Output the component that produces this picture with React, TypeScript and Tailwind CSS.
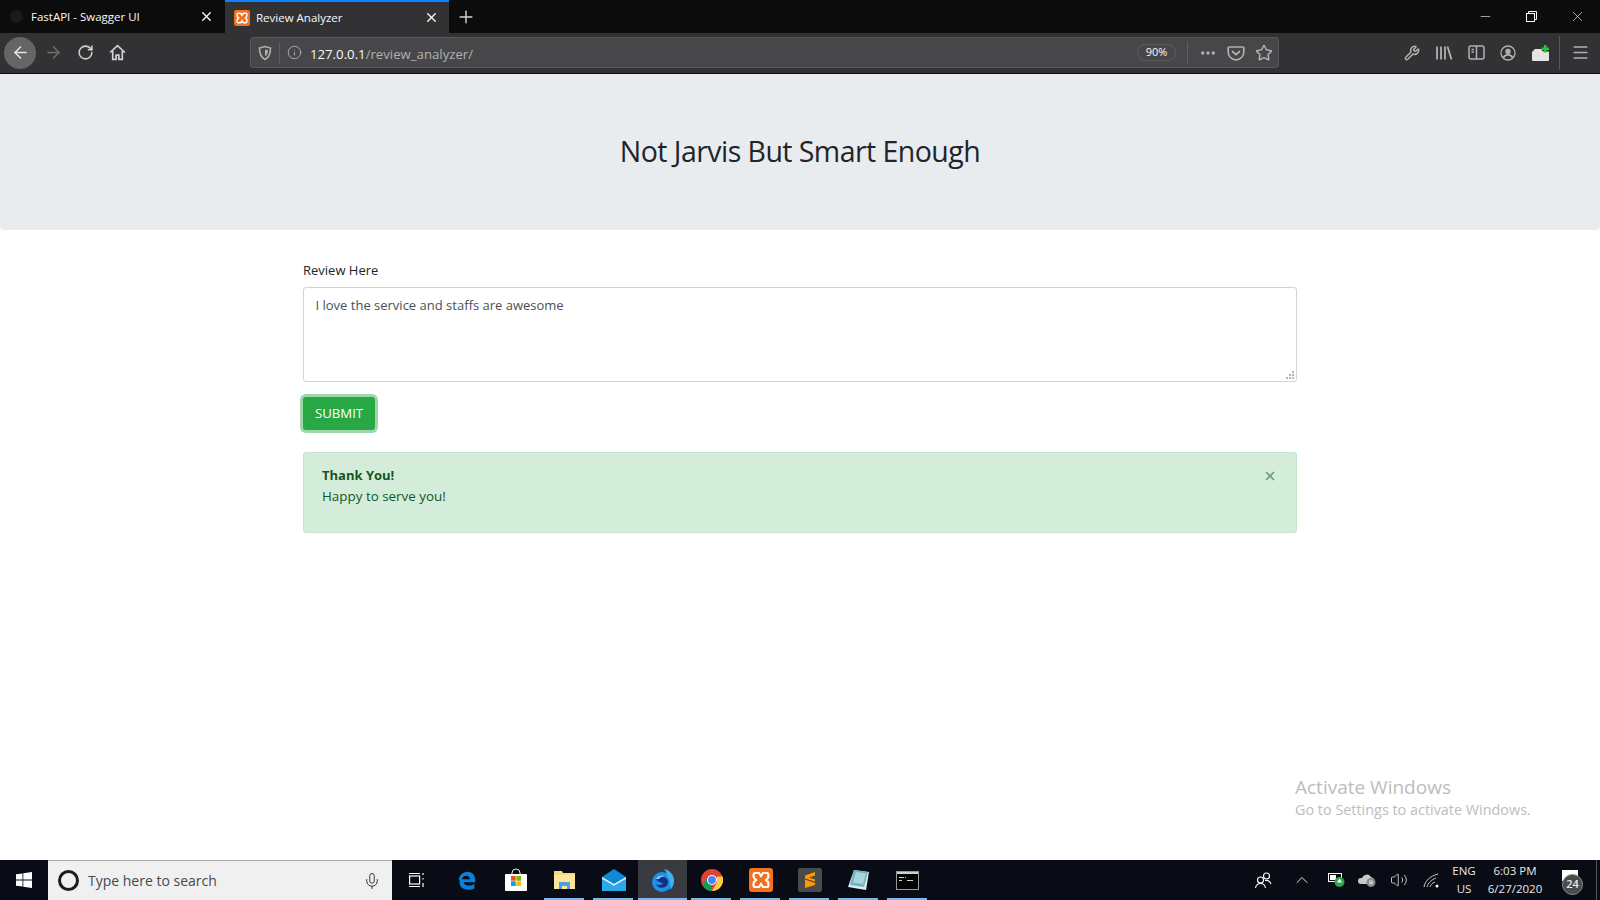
import { ArrowLeft, ArrowRight, RotateCw, Plus, X, Minus, Info, Ellipsis, Star, Wrench, Menu, Mic, ChevronUp, Volume2 } from "lucide-react"

const font = "font-['Open_Sans','Noto_Sans',sans-serif]"

function XamppIcon({ size = 16 }: { size?: number }) {
  return (
    <svg width={size} height={size} viewBox="0 0 24 24">
      <rect width="24" height="24" rx="3" fill="#f4701f" />
      <path
        d="M6 5h4l2 3 2-3h4c2 0 2 5 0 6l-1 1 1 1c2 1 2 6 0 6h-4l-2-3-2 3H6c-2 0-2-5 0-6l1-1-1-1C4 10 4 5 6 5z"
        fill="none"
        stroke="#fff"
        strokeWidth="2.2"
      />
    </svg>
  )
}

function ShieldIcon() {
  return (
    <svg width="16" height="16" viewBox="0 0 16 16" fill="none" stroke="#b1b1b3" strokeWidth="1.6">
      <path d="M2.5 3 8 1.5 13.500 3c0 6-1.500 9.500-5.500 11.500C4 12.500 2.500 9 2.500 3z" />
      <path d="M8 4.500 11 5.300c0 3-.8 4.700-3 6z" fill="#b1b1b3" stroke="none" />
    </svg>
  )
}

function PocketIcon() {
  return (
    <svg width="18" height="18" viewBox="0 0 18 18" fill="none" stroke="#b1b1b3" strokeWidth="1.700">
      <path d="M2 3h14a.8.8 0 0 1 .8.800V8a7.800 7.800 0 0 1-15.600 0V3.800A.8.8 0 0 1 2 3z" />
      <path d="m5.500 7.500 3.500 3.200 3.500-3.200" strokeLinecap="round" />
    </svg>
  )
}

function LibraryIcon() {
  return (
    <svg width="18" height="16" viewBox="0 0 18 16" fill="none" stroke="#b1b1b3" strokeWidth="1.800">
      <path d="M2 1.500v13M6 1.500v13M10 1.500v13M12.500 1.500l4 13" />
    </svg>
  )
}

function SidebarIcon() {
  return (
    <svg width="17" height="15" viewBox="0 0 17 15" fill="none" stroke="#b1b1b3" strokeWidth="1.500">
      <rect x="1" y="1" width="15" height="13" rx="2" />
      <path d="M8.500 1v13M3.500 4.500h2.500M3.500 7h2.500" />
    </svg>
  )
}

function AccountIcon() {
  return (
    <svg width="16" height="16" viewBox="0 0 16 16" fill="none" stroke="#b1b1b3" strokeWidth="1.300">
      <circle cx="8" cy="8" r="7" />
      <circle cx="8" cy="6.500" r="2.700" fill="#b1b1b3" stroke="none" />
      <path d="M3.500 12.500c1-2 2.800-2.600 4.500-2.600s3.500.6 4.500 2.600" strokeWidth="1.800" />
    </svg>
  )
}

function ExtensionIcon() {
  return (
    <svg width="17" height="16" viewBox="0 0 17 16">
      <path d="M0 7 3 4h6l2 2.500h5a1 1 0 0 1 1 1V15a1 1 0 0 1-1 1H1a1 1 0 0 1-1-1z" fill="#e4e4e4" />
      <path d="M9.500 2.500H12V0h2.500v2.500H17V5h-2.500v2.500H12V5H9.500z" fill="#22c733" />
    </svg>
  )
}

function BrowserChrome() {
  return (
    <div className="shrink-0">
      <div className="h-[33px] flex bg-[#0c0c0d] text-[11.500px] text-[#f9f9fa]">
        <div className="w-[225px] flex items-center pl-[10px] pr-[11px]">
          <span className="w-[13px] h-[13px] rounded-full bg-[#1a1a1a] mr-[8px]" />
          <span className="flex-1">FastAPI - Swagger UI</span>
          <X size={15} strokeWidth={2.2} />
        </div>
        <div className="w-[224px] flex items-center pl-[9px] pr-[10px] bg-[#323234] border-t-2 border-[#0a84ff]">
          <XamppIcon />
          <span className="flex-1 ml-[6px]">Review Analyzer</span>
          <X size={15} strokeWidth={2.2} />
        </div>
        <div className="w-[34px] flex items-center justify-center">
          <Plus size={20} strokeWidth={1.700} color="#d4d4d6" />
        </div>
        <div className="flex-1" />
        <div className="w-[46px] flex items-center justify-center"><Minus size={15} strokeWidth={1} /></div>
        <div className="w-[46px] flex items-center justify-center">
          <svg width="11" height="11" viewBox="0 0 11 11" fill="none" stroke="#f9f9fa">
            <rect x="0.500" y="2.500" width="8" height="8" />
            <path d="M2.500 2.500v-2h8v8h-2" />
          </svg>
        </div>
        <div className="w-[46px] flex items-center justify-center"><X size={17} strokeWidth={0.9} /></div>
      </div>
      <div className="h-[41px] flex items-center bg-[#323234] border-b border-[#0c0c0d] pb-[1px]">
        <div className="flex items-center pl-[4px] w-[250px]">
          <span className="w-[32px] h-[32px] rounded-full bg-[#656566] flex items-center justify-center">
            <ArrowLeft size={19} color="#e4e4e6" strokeWidth={2} />
          </span>
          <span className="w-[34px] flex justify-center"><ArrowRight size={19} color="#6f6f71" strokeWidth={2} /></span>
          <span className="w-[30px] flex justify-center"><RotateCw size={17} color="#d0d0d2" strokeWidth={2.200} /></span>
          <span className="w-[34px] flex justify-center">
            <svg width="17" height="17" viewBox="0 0 16 16" fill="none" stroke="#d0d0d2" strokeWidth="1.600">
              <path d="M1 8 8 1.500 15 8M3.500 6.500V14.500h3.200v-4h2.600v4h3.200V6.500" />
            </svg>
          </span>
        </div>
        <div className="w-[1029px] h-[31px] flex items-center bg-[#474749] border border-[#58585a] rounded-[3px] text-[#b1b1b3]">
          <span className="w-[28px] flex justify-center"><ShieldIcon /></span>
          <span className="w-px h-[22px] bg-[#5f5f61]" />
          <span className="w-[29px] flex justify-center"><Info size={15} strokeWidth={1.500} /></span>
          <span className="flex-1 text-[13.200px] pt-[4px] pl-[1px] text-[#b1b1b3]">
            <span className="text-[#f9f9fa]">127.0.0.1</span>/review_analyzer/
          </span>
          <span className="w-[39px] h-[17px] rounded-full border border-[#5f5f61] text-[11px] text-[#f9f9fa] flex items-center justify-center mr-[11px]">90%</span>
          <span className="w-px h-[22px] bg-[#5f5f61]" />
          <span className="w-[29px] ml-[5px] flex justify-center"><Ellipsis size={18} strokeWidth={2.500} /></span>
          <span className="w-[28px] flex justify-center"><PocketIcon /></span>
          <span className="w-[28px] flex justify-center"><Star size={18} strokeWidth={2} /></span>
        </div>
        <div className="flex-1 flex items-center pl-[117px]">
          <span className="w-[32px] flex justify-center"><Wrench size={16} color="#b1b1b3" strokeWidth={2.200} /></span>
          <span className="w-[32px] flex justify-center"><LibraryIcon /></span>
          <span className="w-[32px] flex justify-center"><SidebarIcon /></span>
          <span className="w-[32px] flex justify-center"><AccountIcon /></span>
          <span className="w-[32px] flex justify-center"><ExtensionIcon /></span>
          <span className="w-px h-[34px] bg-[#58585a] ml-[3px]" />
          <span className="flex-1 flex justify-center"><Menu size={19} color="#b1b1b3" strokeWidth={2} /></span>
        </div>
      </div>
    </div>
  )
}

function Page() {
  return (
    <div className="relative flex-1 bg-white">
      <div className="h-[156px] bg-[#e9ecef] rounded-b-[4px] flex items-center justify-center pb-[1px]">
        <h1 className="text-[28.500px] tracking-[-0.55px] font-normal text-[#212529] leading-none">Not Jarvis But Smart Enough</h1>
      </div>
      <div className="w-[994px] mx-auto pt-[31px]">
        <label className="block text-[13px] leading-[19px] text-[#212529] mb-[7px]">Review Here</label>
        <div className="relative h-[95px] border border-[#ced4da] rounded-[3px] pl-[11.500px] pr-[12px] pt-[7px] text-[13px] leading-[20px] text-[#495057]">
          I love the service and staffs are awesome
          <svg className="absolute right-[1px] bottom-[1px]" width="10" height="10" viewBox="0 0 10 10" fill="#b5b5b5">
            <rect x="7" y="1" width="2" height="2" />
            <rect x="4" y="4" width="2" height="2" />
            <rect x="7" y="4" width="2" height="2" />
            <rect x="1" y="7" width="2" height="2" />
            <rect x="4" y="7" width="2" height="2" />
            <rect x="7" y="7" width="2" height="2" />
          </svg>
        </div>
        <button className="block mt-[15px] w-[72px] h-[33px] rounded-[3px] bg-[#28a745] text-white text-[13.200px] shadow-[0_0_0_3px_rgba(40,167,69,0.45)]">
          SUBMIT
        </button>
        <div className="mt-[22px] h-[81px] flex justify-between bg-[#d4edda] border border-[#c3e6cb] rounded-[3px] pl-[18px] pr-[19px] pt-[12px] text-[13.400px] leading-[21px] text-[#155724]">
          <div>
            <div className="font-bold text-[13px]">Thank You!</div>
            <div>Happy to serve you!</div>
          </div>
          <X size={14} strokeWidth={3} color="#6f9f7d" className="mt-[4px]" />
        </div>
      </div>
      <div className="absolute left-[1295px] top-[700px] text-[#bdbdbd]">
        <div className="text-[19px] leading-[26px]">Activate Windows</div>
        <div className="text-[14.400px] leading-[20px]">Go to Settings to activate Windows.</div>
      </div>
    </div>
  )
}

function TaskCell({ active, open, first, children }: { active?: boolean; open?: boolean; first?: boolean; children: React.ReactNode }) {
  return (
    <div className={`relative ${first ? "w-[50px]" : "w-[49px]"} h-full flex items-center justify-center ${active ? "bg-[#393b41]" : ""}`}>
      {children}
      {open && (
        <span className={`absolute bottom-0 h-[2px] bg-[#76b9ed] ${active ? "left-0 right-0" : "left-[4px] right-[5px]"}`} />
      )}
    </div>
  )
}

function Taskbar() {
  return (
    <div className="h-[40px] shrink-0 flex bg-[#090c14] text-white">
      <div className="w-[48px] flex items-center justify-center">
        <svg width="16" height="16" viewBox="0 0 16 16" fill="#fff">
          <path d="M0 2.300 6.500 1.400v6.200H0zM7.300 1.300 16 0v7.600H7.300zM0 8.400h6.500v6.200L0 13.700zM7.300 8.400H16V16l-8.700-1.300z" />
        </svg>
      </div>
      <div className="w-[344px] flex items-center bg-[#f0f0f0] border-t border-[#a9a9a9] pl-[10px] pr-[11px] text-[#444a50]">
        <span className="w-[21px] h-[21px] rounded-full border-[3px] border-[#1c1c1c] mr-[9px]" />
        <span className="flex-1 text-[14px]">Type here to search</span>
        <Mic size={18} color="#333" strokeWidth={1.300} />
      </div>
      <TaskCell first>
        <svg width="16" height="16" viewBox="0 0 16 16" fill="none" stroke="#fff" strokeWidth="1.200">
          <rect x="0.600" y="4" width="10" height="8" />
          <path d="M0 1.500h11M0 14.500h11M14 1v2M14 6v1.500M14 11v4" />
        </svg>
      </TaskCell>
      <TaskCell>
        <svg width="21" height="21" viewBox="0 0 24 24" fill="none">
          <path d="M3 13C3 6 8 2 13 2c6 0 9 4 9 10v2H9c.5 4 6.500 5 12 2v5c-6 3-17 2-17-7 0-3 2-6 5-7-1.500 1-2 2.500-2 3.500h9c0-4-6-6-9-1C5.500 10 4 11 3 13z" fill="#0a7fdc" />
        </svg>
      </TaskCell>
      <TaskCell>
        <svg width="24" height="24" viewBox="0 0 24 24">
          <path d="M8 7V5a4 4 0 0 1 8 0v2" fill="none" stroke="#e8e8e8" strokeWidth="1" />
          <rect x="1" y="6" width="22" height="17" rx="1" fill="#fff" />
          <rect x="7" y="8" width="4.700" height="4.700" fill="#f25022" />
          <rect x="12.300" y="8" width="4.700" height="4.700" fill="#7fba00" />
          <rect x="7" y="13.300" width="4.700" height="4.700" fill="#00a4ef" />
          <rect x="12.300" y="13.300" width="4.700" height="4.700" fill="#ffb900" />
        </svg>
      </TaskCell>
      <TaskCell open>
        <svg width="23" height="20" viewBox="0 0 23 20">
          <path d="M1 1h8l1 2h12v16H1z" fill="#f5d97e" />
          <path d="M1 5h21v14H1z" fill="#fbe69c" />
          <path d="M6 19v-7h11v7h-3v-3H9v3z" fill="#4aa3df" />
        </svg>
      </TaskCell>
      <TaskCell open>
        <svg width="24" height="22" viewBox="0 0 24 22">
          <path d="M0 8 12 0l12 8v14H0z" fill="#0f8ad9" />
          <path d="M0 8l12 7 12-7v2l-12 7L0 10z" fill="#e4f3fc" />
          <path d="M0 10l12 7 12-7v12H0z" fill="#29a9ea" />
        </svg>
      </TaskCell>
      <TaskCell active open>
        <svg width="24" height="24" viewBox="0 0 24 24">
          <circle cx="11" cy="14" r="10" fill="#1f8fe8" />
          <path d="M13 1c6 1 10 6 10 12 0 4-2 7-4 9 1-6 0-11-3-14 0-3-1-5-3-7z" fill="#3fb2f5" />
          <path d="M5 12c2-3 7-4 10-2 3 2 3 7-1 9-4 2-8 0-9-3 3 2 6 1 7-1-2 0-4-1-7-3z" fill="#17307e" />
          <path d="M5 11c2-3 6-4 9-3-3 0-5 1-6 3z" fill="#a5dcff" />
        </svg>
      </TaskCell>
      <TaskCell open>
        <svg width="22" height="22" viewBox="0 0 22 22">
          <circle cx="11" cy="11" r="11" fill="#db4437" />
          <path d="M11 22a11 11 0 0 1-9.500-5.500L7 8l4 3z" fill="#0f9d58" />
          <path d="M21.500 7.500A11 11 0 0 1 11 22l5-8.500V7.500z" fill="#ffcd40" />
          <circle cx="11" cy="11" r="5" fill="#fff" />
          <circle cx="11" cy="11" r="3.900" fill="#4285f4" />
        </svg>
      </TaskCell>
      <TaskCell open><XamppIcon size={24} /></TaskCell>
      <TaskCell open>
        <svg width="24" height="24" viewBox="0 0 24 24">
          <rect width="24" height="24" rx="2" fill="#4a4a4a" />
          <path d="M17 5 7 8.500v4l10 3.500v-3.500L11 10.500 17 8.500zM7 11.500l10 3v3.500L7 21z" fill="#ff9800" transform="translate(0 -1)" />
        </svg>
      </TaskCell>
      <TaskCell open>
        <svg width="24" height="24" viewBox="0 0 24 24">
          <path d="M7 2 22 4l-3 18-18-3z" fill="#d9ecec" />
          <path d="M7 2 21 4l-4 15-14-2z" fill="#6fb4c4" />
          <path d="M9 4 19 5.500 16 16 6 14.500z" fill="#a9d5dc" />
        </svg>
      </TaskCell>
      <TaskCell open>
        <svg width="23" height="19" viewBox="0 0 23 19">
          <rect x="0.500" y="0.500" width="22" height="18" fill="#000" stroke="#9a9a9a" />
          <rect x="1" y="1" width="21" height="2" fill="#cfcfcf" />
          <path d="M3 6h5v1H3zM9 6h1v1H9zM3 9h3v1H3zM11 9h6v1h-6z" fill="#d0d0d0" />
        </svg>
      </TaskCell>
      <div className="flex-1 flex items-center justify-end text-[11.500px] text-[#e8e8e8]">
        <span className="w-[38px] flex justify-center">
          <svg width="17" height="17" viewBox="0 0 17 17" fill="none" stroke="#fff" strokeWidth="1.100">
            <circle cx="5.500" cy="8" r="3" />
            <circle cx="11.500" cy="4" r="3" />
            <path d="M0.500 16c.5-3 2-4.500 5-4.500s4.500 1.500 5 4.500M10 8.500c2.500-.5 5 1 6 3.500" />
          </svg>
        </span>
        <span className="w-[40px] flex justify-center"><ChevronUp size={20} strokeWidth={1.200} /></span>
        <span className="w-[28px] flex justify-center">
          <svg width="17" height="14" viewBox="0 0 17 14">
            <rect x="0.500" y="0.500" width="13" height="8" fill="none" stroke="#fff" />
            <rect x="2" y="2" width="6" height="5" fill="#fff" />
            <circle cx="11.500" cy="9" r="5" fill="#2aa84a" />
            <path d="M11.500 5.500 14 9.500h-5z" fill="#fff" />
          </svg>
        </span>
        <span className="w-[35px] flex justify-center">
          <svg width="19" height="14" viewBox="0 0 19 14">
            <path d="M3 11a3 3 0 0 1 0-6h1a5 5 0 0 1 9-1 4 4 0 0 1 2 7z" fill="#c9c9c9" />
            <circle cx="13" cy="9.500" r="4.500" fill="#8a8a8a" />
            <path d="M11.500 7.500h1v4h-1zM13.500 7.500h1v4h-1z" fill="#fff" />
          </svg>
        </span>
        <span className="w-[28px] flex justify-center"><Volume2 size={18} strokeWidth={1.100} /></span>
        <span className="w-[36px] flex justify-center">
          <svg width="17" height="15" viewBox="0 0 17 15" fill="none" stroke="#c8c8c8" strokeWidth="1">
            <path d="M1 14C2 8 7 3 15 1M4 14c1-4 4-7 9-9M7 14c.5-2 2-4 5-5" />
            <circle cx="14" cy="13" r="1.500" fill="#fff" stroke="none" />
          </svg>
        </span>
        <div className="w-[30px] text-center leading-[18px]">
          <div>ENG</div>
          <div>US</div>
        </div>
        <div className="w-[72px] mr-[1px] text-center leading-[18px]">
          <div>6:03 PM</div>
          <div>6/27/2020</div>
        </div>
        <span className="relative w-[44px] h-full flex justify-center items-center">
          <svg width="16" height="15" viewBox="0 0 16 15" fill="#fff" className="-mt-[6px] -ml-[8px]">
            <path d="M0 0h16v11H5l-3 3v-3H0z" />
          </svg>
          <span className="absolute left-[10px] top-[14px] w-[21px] h-[21px] rounded-full bg-[#4a4a4a] border border-[#8c8c8c] text-[11px] font-semibold flex items-center justify-center">24</span>
        </span>
        <span className="w-px h-full bg-[#555] mr-[3px]" />
      </div>
    </div>
  )
}

export default function App() {
  return (
    <div className={`h-[900px] flex flex-col overflow-hidden ${font}`}>
      <BrowserChrome />
      <Page />
      <Taskbar />
    </div>
  )
}
